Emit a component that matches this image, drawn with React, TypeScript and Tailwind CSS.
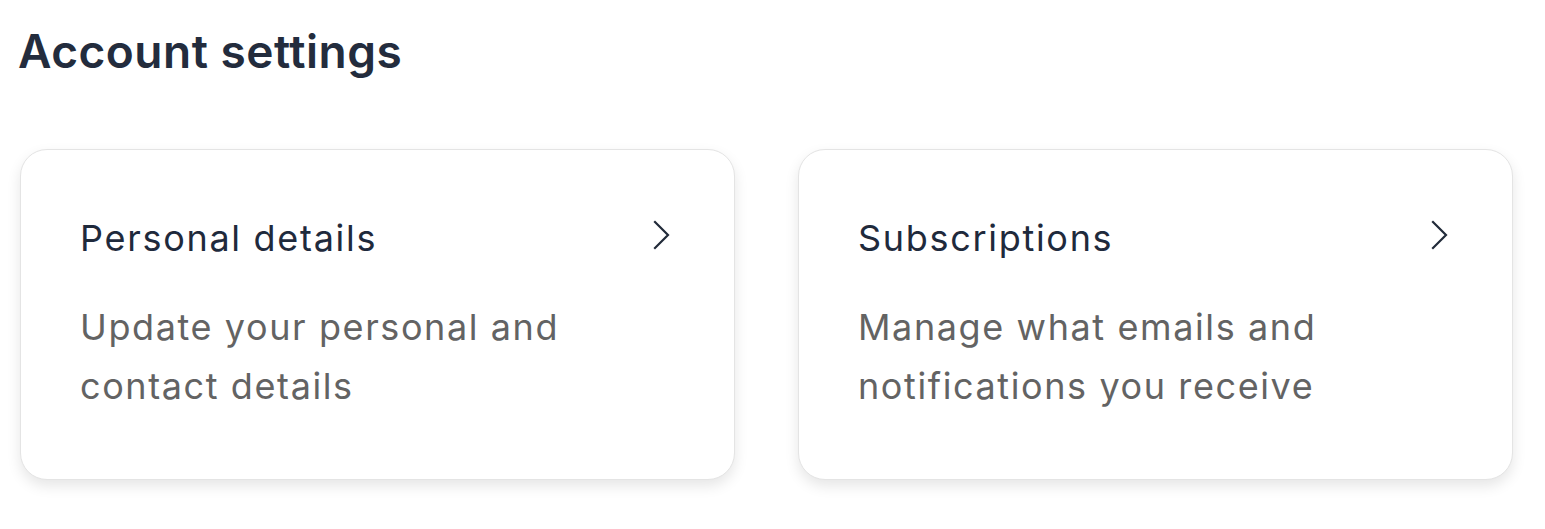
import React from "react";

function Chevron() {
  return (
    <svg width="18" height="30" viewBox="0 0 18 30" fill="none" className="shrink-0 -mt-[6px]">
      <path d="M3 2 L16 15 L3 28" stroke="#222b3a" strokeWidth="2.2" strokeLinecap="square" strokeLinejoin="miter" />
    </svg>
  );
}

function Card({ title, desc }: { title: string; desc: string[] }) {
  return (
    <div className="w-[715px] h-[331px] rounded-[27px] border border-[#e4e4e4] bg-white shadow-[0_6px_14px_rgba(0,0,0,0.10)] pl-[59px] pr-[64px] pt-[66px]">
      <div className="flex items-center justify-between">
        <span className="text-[36px] leading-[44px] tracking-[1.7px] text-[#1f2a3c]">{title}</span>
        <Chevron />
      </div>
      <p className="mt-[38px] text-[36px] leading-[59px] tracking-[1.6px] text-[#636363]">
        {desc[0]}
        <br />
        {desc[1]}
      </p>
    </div>
  );
}

export default function App() {
  return (
    <div className="min-h-[529px] bg-white px-[18px] pt-[20px]" style={{ fontFamily: "Inter, 'Noto Sans', sans-serif" }}>
      <h1 className="text-[46px] leading-[62px] font-semibold text-[#232c3d] tracking-[0.5px]">Account settings</h1>
      <div className="mt-[67px] flex gap-[63px] pl-[2px]">
        <Card title="Personal details" desc={["Update your personal and", "contact details"]} />
        <Card title="Subscriptions" desc={["Manage what emails and", "notifications you receive"]} />
      </div>
    </div>
  );
}
